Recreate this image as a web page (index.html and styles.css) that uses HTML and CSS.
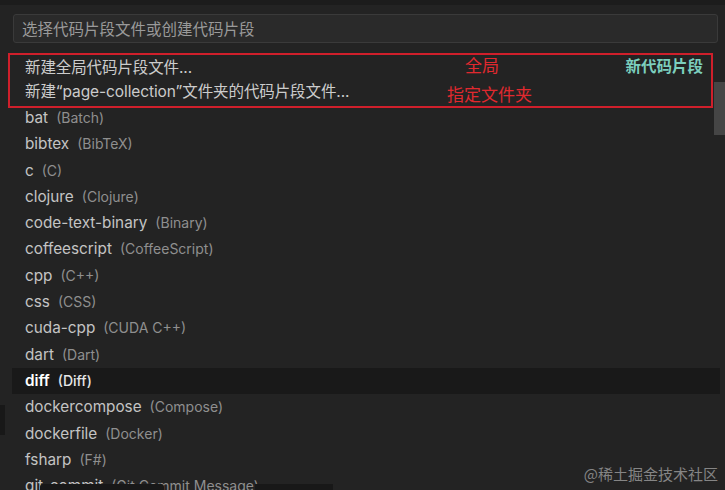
FILE: index.html
```html
<!DOCTYPE html>
<html lang="zh-CN">
<head>
<meta charset="utf-8">
<link rel="stylesheet" href="styles.css">
</head>
<body>
<div class="picker">
  <div class="topstrip"></div>
  <div class="input">选择代码片段文件或创建代码片段</div>
  <div class="list">
    <div class="group">
      <div class="grow">
        <span class="label">新建全局代码片段文件...</span>
        <span class="note note-global">全局</span>
        <span class="tag">新代码片段</span>
      </div>
      <div class="grow">
        <span class="label">新建“page-collection”文件夹的代码片段文件...</span>
        <span class="note note-folder">指定文件夹</span>
      </div>
    </div>
    <div class="rows">
      <div class="row"><span class="name">bat</span><span class="desc">(Batch)</span></div>
      <div class="row"><span class="name">bibtex</span><span class="desc">(BibTeX)</span></div>
      <div class="row"><span class="name">c</span><span class="desc">(C)</span></div>
      <div class="row"><span class="name">clojure</span><span class="desc">(Clojure)</span></div>
      <div class="row"><span class="name">code-text-binary</span><span class="desc">(Binary)</span></div>
      <div class="row"><span class="name">coffeescript</span><span class="desc">(CoffeeScript)</span></div>
      <div class="row"><span class="name">cpp</span><span class="desc">(C++)</span></div>
      <div class="row"><span class="name">css</span><span class="desc">(CSS)</span></div>
      <div class="row"><span class="name">cuda-cpp</span><span class="desc">(CUDA C++)</span></div>
      <div class="row"><span class="name">dart</span><span class="desc">(Dart)</span></div>
      <div class="row active"><span class="name">diff</span><span class="desc">(Diff)</span></div>
      <div class="row"><span class="name">dockercompose</span><span class="desc">(Compose)</span></div>
      <div class="row"><span class="name">dockerfile</span><span class="desc">(Docker)</span></div>
      <div class="row"><span class="name">fsharp</span><span class="desc">(F#)</span></div>
      <div class="row"><span class="name">git-commit</span><span class="desc">(Git Commit Message)</span></div>
    </div>
    <div class="scrollbar"></div>
  </div>
  <div class="shade shade-left"></div>
  <div class="shade shade-b1"></div>
  <div class="shade shade-b2"></div>
  <div class="watermark">@稀土掘金技术社区</div>
</div>
</body>
</html>
```
FILE: styles.css
```css
html, body {
  margin: 0;
  padding: 0;
  background: #232323;
  overflow: hidden;
}
.picker {
  position: relative;
  width: 725px;
  height: 490px;
  overflow: hidden;
  font-family: Inter, "Noto Sans CJK SC", sans-serif;
  background: #232323;
}
.topstrip {
  height: 5px;
  background: #1c1c1c;
}
.input {
  margin: 9px 7px 0 13px;
  height: 29px;
  box-sizing: border-box;
  border: 1px solid #3a3a3a;
  border-radius: 3px;
  background: #2a2a2a;
  color: #9a9a9a;
  font-size: 15.5px;
  line-height: 27px;
  padding-left: 8px;
  font-family: "Noto Sans CJK SC", sans-serif;
}
.list {
  position: relative;
  margin-top: 10px;
}
.group {
  position: relative;
  margin-left: 8px;
  width: 705px;
  height: 55px;
  box-sizing: border-box;
  border: 2px solid #cf1f2b;
}
.grow {
  position: relative;
  height: 24px;
  line-height: 22px;
  padding-left: 15px;
  font-size: 15.5px;
  color: #cccccc;
  font-family: "Noto Sans CJK SC", sans-serif;
}
.label {
  font-family: Inter, "Noto Sans CJK SC", sans-serif;
  letter-spacing: -0.1px;
}
.note {
  position: absolute;
  color: #e0292f;
  font-size: 17px;
  font-family: "Noto Sans CJK SC", sans-serif;
}
.note-global {
  left: 455px;
  top: -1px;
}
.note-folder {
  left: 437px;
  top: 4px;
}
.tag {
  position: absolute;
  right: 8px;
  top: -1px;
  color: #7ccfbe;
  font-weight: 600;
  font-size: 15.5px;
}
.rows {
  margin-top: -3px;
}
.row {
  display: flex;
  align-items: baseline;
  gap: 8px;
  height: 26.3px;
  line-height: 26.3px;
  margin-left: 12px;
  margin-right: 5px;
  padding-left: 13px;
  font-size: 15.3px;
  color: #c4c4c4;
  white-space: nowrap;
}
.desc {
  font-size: 14px;
  color: #8f8f8f;
}
.row.active {
  background: #191919;
  color: #ffffff;
  font-weight: 600;
}
.row.active .desc {
  color: #e6e6e6;
  font-weight: 500;
}
.scrollbar {
  position: absolute;
  right: 0;
  top: 29px;
  width: 11px;
  height: 53px;
  background: #454545;
}
.shade {
  position: absolute;
  background: #181818;
}
.shade-left {
  left: 0;
  top: 405px;
  width: 5px;
  height: 30px;
}
.shade-b1 {
  left: 40px;
  top: 484px;
  width: 124px;
  height: 6px;
  border-radius: 3px 3px 0 0;
}
.shade-b2 {
  left: 255px;
  top: 484px;
  width: 78px;
  height: 6px;
}
.watermark {
  position: absolute;
  right: 7px;
  bottom: 6px;
  font-size: 15px;
  color: #858585;
  font-family: "Noto Sans CJK SC", sans-serif;
}
```
